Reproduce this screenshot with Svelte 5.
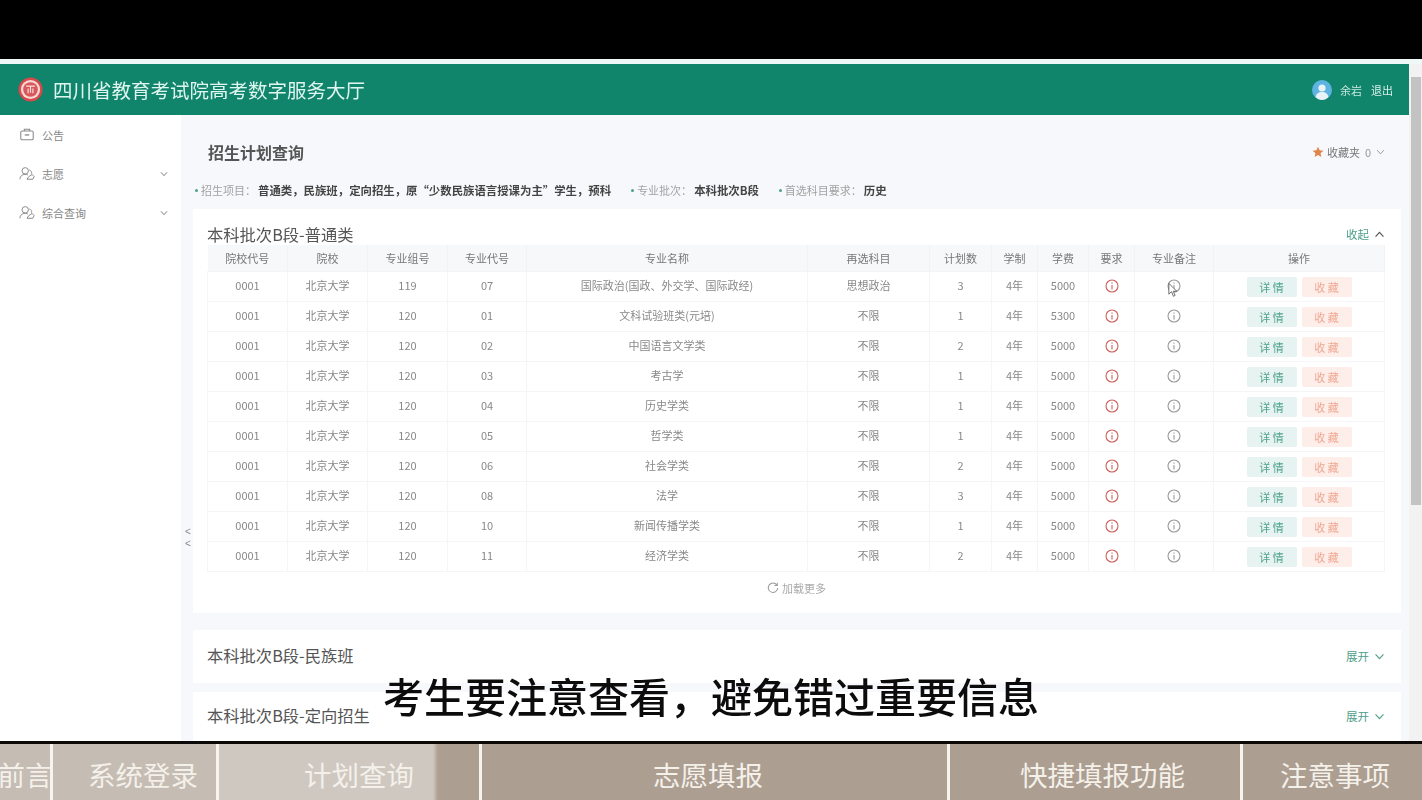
<script>
  const rows = [
    ['119','07','国际政治(国政、外交学、国际政经)','思想政治','3','5000'],
    ['120','01','文科试验班类(元培)','不限','1','5300'],
    ['120','02','中国语言文学类','不限','2','5000'],
    ['120','03','考古学','不限','1','5000'],
    ['120','04','历史学类','不限','1','5000'],
    ['120','05','哲学类','不限','1','5000'],
    ['120','06','社会学类','不限','2','5000'],
    ['120','08','法学','不限','3','5000'],
    ['120','10','新闻传播学类','不限','1','5000'],
    ['120','11','经济学类','不限','2','5000']
  ];
  const heads = ['院校代号','院校','专业组号','专业代号','专业名称','再选科目','计划数','学制','学费','要求','专业备注','操作'];
  const cols = [80,80,80,79,281,122,62,46,51,46,79,171];
</script>

{#snippet info(cls)}
  <svg class="info {cls}" viewBox="0 0 14 14" aria-hidden="true"><circle cx="7" cy="7" r="6" fill="none" stroke="currentColor" stroke-width="1.1"/><path d="M7 3.6v1.2M7 6v4.4" fill="none" stroke="currentColor" stroke-width="1.1"/></svg>
{/snippet}

{#snippet chev(cls)}
  <svg class="chev {cls}" viewBox="0 0 12 8" aria-hidden="true"><path d="M1.5 1.5 6 6.5l4.5-5" fill="none" stroke="currentColor" stroke-width="1.3"/></svg>
{/snippet}

{#snippet people()}
  <svg class="side-ic" viewBox="0 0 18 16" aria-hidden="true"><g fill="none" stroke="#8a8a8a" stroke-width="1.1"><circle cx="7" cy="5" r="3.6"/><path d="M1 14.5c0-3.4 2.6-5.6 6-5.6 1.200 0 2.200.3 3 .8"/><path d="M11.500 4c2.200.4 3.300 2.500 2.400 4.300M9 14.500h6.500L17 11.500l-2.200-2.500-3.800 2.500z"/></g></svg>
{/snippet}

<div class="screen">
  <div class="topband"></div>
  <div class="stripe"></div>
  <div class="window">
    <div class="app">
      <header class="header">
        <div class="brand">
          <svg class="logo" viewBox="0 0 26 26" aria-hidden="true"><circle cx="13" cy="13" r="12.500" fill="#d9484a"/><circle cx="13" cy="13" r="10" fill="#f6d9d4"/><circle cx="13" cy="13" r="7.600" fill="#d9565a"/><path d="M8.500 9.500h9M10.500 12v5M15.500 12v5M13 9.500v7" stroke="#f8e4e0" stroke-width="1.200" fill="none"/></svg>
          <span class="brand-name">四川省教育考试院高考数字服务大厅</span>
        </div>
        <div class="user">
          <svg class="avatar" viewBox="0 0 20 20" aria-hidden="true"><circle cx="10" cy="10" r="10" fill="#5db4e0"/><circle cx="10" cy="8" r="3.600" fill="#e8f3f8"/><path d="M3.500 17c1-3.800 3.600-5 6.500-5s5.500 1.200 6.500 5c-1.800 1.800-4 3-6.500 3s-4.700-1.200-6.500-3z" fill="#e8f3f8"/></svg>
          <span class="uname">余岩</span>
          <span class="logout">退出</span>
        </div>
      </header>
      <div class="body">
        <aside class="side">
          <div class="side-item">
            <svg class="side-ic" viewBox="0 0 18 16" aria-hidden="true"><g fill="none" stroke="#8a8a8a" stroke-width="1.200"><rect x="2" y="4" width="14" height="10" rx="1.500"/><path d="M6 4V2h6v2"/><path d="M6.500 8.500h5" stroke-width="1.500"/></g></svg>
            <span>公告</span>
          </div>
          <div class="side-item">
            {@render people()}
            <span>志愿</span>
            {@render chev('side-chev')}
          </div>
          <div class="side-item">
            {@render people()}
            <span>综合查询</span>
            {@render chev('side-chev')}
          </div>
        </aside>
        <main class="main">
          <div class="collapse-handle"><span>&lt;</span><span>&lt;</span></div>
          <div class="page-head">
            <h1>招生计划查询</h1>
            <div class="fav">
              <svg class="star" viewBox="0 0 14 14" aria-hidden="true"><path d="M7 .8 8.900 4.900l4.400.5-3.300 3 .9 4.400L7 10.600l-3.900 2.200.9-4.400-3.300-3 4.400-.5z" fill="#e0854a"/></svg>
              <span>收藏夹</span><span class="fav-num">0</span>
              {@render chev('fav-chev')}
            </div>
          </div>
          <div class="filters">
            <span class="filter wide"><i></i><em>招生项目：</em><b>普通类，民族班，定向招生，原“少数民族语言授课为主”学生，预科</b></span>
            <span class="filter"><i></i><em>专业批次：</em><b>本科批次B段</b></span>
            <span class="filter"><i></i><em>首选科目要求：</em><b>历史</b></span>
          </div>

          <section class="card open">
            <div class="card-head">
              <h2>本科批次B段-普通类</h2>
              <span class="toggle toggle-up">收起 {@render chev('up')}</span>
            </div>
            <table>
              <colgroup>
                {#each cols as w}<col style="width:{w}px" />{/each}
              </colgroup>
              <thead>
                <tr>{#each heads as h}<th>{h}</th>{/each}</tr>
              </thead>
              <tbody>
                {#each rows as r}
                  <tr>
                    <td>0001</td>
                    <td>北京大学</td>
                    <td>{r[0]}</td>
                    <td>{r[1]}</td>
                    <td>{r[2]}</td>
                    <td>{r[3]}</td>
                    <td>{r[4]}</td>
                    <td>4年</td>
                    <td>{r[5]}</td>
                    <td>{@render info('red')}</td>
                    <td>{@render info('grey')}</td>
                    <td><div class="ops"><span class="btn detail">详 情</span><span class="btn save">收 藏</span></div></td>
                  </tr>
                {/each}
              </tbody>
            </table>
            <div class="more">
              <svg class="refresh" viewBox="0 0 14 14" aria-hidden="true"><path d="M11.500 3.500A5.500 5.500 0 1 0 12.500 7" fill="none" stroke="#999" stroke-width="1.200"/><path d="M12 1v3.200H8.800" fill="none" stroke="#999" stroke-width="1.200"/></svg>
              <span>加载更多</span>
            </div>
          </section>

          <section class="card closed">
            <h2>本科批次B段-民族班</h2>
            <span class="toggle">展开 {@render chev('')}</span>
          </section>
          <section class="card closed last">
            <h2>本科批次B段-定向招生</h2>
            <span class="toggle">展开 {@render chev('')}</span>
          </section>
        </main>
      </div>
      <svg class="cursor" viewBox="0 0 12 18" aria-hidden="true"><path d="M1 1v13l3.200-3 2.300 5.500 2-.9L6.300 10.500H10.500z" fill="#fff" stroke="#555" stroke-width="1"/></svg>
      <div class="caption">考生要注意查看，避免错过重要信息</div>
    </div>
    <div class="scrollbar">
      <div class="thumb"></div>
    </div>
  </div>
  <nav class="chapters">
    <div class="seg s1 done">前言</div>
    <div class="seg s2 done">系统登录</div>
    <div class="seg s3 current">计划查询</div>
    <div class="seg s4">志愿填报</div>
    <div class="seg s5">快捷填报功能</div>
    <div class="seg s6">注意事项</div>
  </nav>
</div>

<style>
  :global(body) {
    margin: 0;
    background: #000;
  }
  .screen {
    width: 1422px;
    height: 800px;
    display: flex;
    flex-direction: column;
    overflow: hidden;
    font-family: "Noto Sans CJK SC", "Liberation Sans", sans-serif;
    background: #000;
  }
  .topband {
    height: 59px;
    background: #000;
    flex: none;
  }
  .stripe {
    height: 5px;
    background: #eef8f6;
    flex: none;
  }
  .window {
    height: 677px;
    flex: none;
    display: flex;
    background: #f7f8fb;
  }
  .app {
    width: 1409px;
    flex: none;
    display: flex;
    flex-direction: column;
    position: relative;
    overflow: hidden;
  }
  .scrollbar {
    flex: 1;
    background: #f2f2f3;
    padding: 13px 1px 0 2px;
  }
  .thumb {
    height: 428px;
    background: #c3c3c4;
  }
  .header {
    height: 51px;
    flex: none;
    background: #11846c;
    display: flex;
    align-items: center;
    justify-content: space-between;
    padding: 0 16px 0 18px;
    color: #e8f7f3;
    filter: blur(0.35px);
  }
  .brand {
    display: flex;
    align-items: center;
    gap: 10px;
  }
  .logo {
    width: 25px;
    height: 25px;
  }
  .brand-name {
    font-size: 19.500px;
    color: #dff5ef;
  }
  .user {
    display: flex;
    align-items: center;
    font-size: 11px;
  }
  .avatar {
    width: 20px;
    height: 20px;
    margin-right: 8px;
  }
  .uname {
    margin-right: 9px;
    color: #c8e6de;
  }
  .logout {
    color: #d8efe9;
  }
  .body {
    flex: 1;
    display: flex;
    min-height: 0;
    filter: blur(0.35px);
  }
  .side {
    width: 181px;
    flex: none;
    background: #fff;
    box-sizing: border-box;
  }
  .side-item {
    height: 39px;
    display: flex;
    align-items: center;
    padding: 0 13px 0 19px;
    font-size: 11px;
    color: #888;
  }
  .side-ic {
    width: 16px;
    height: 15px;
    margin-right: 7px;
    flex: none;
  }
  .side-chev {
    width: 8px;
    height: 6px;
    margin-left: auto;
    color: #666;
  }
  .main {
    flex: 1;
    min-width: 0;
    padding: 0 8px 0 12px;
    position: relative;
    overflow: hidden;
  }
  .collapse-handle {
    position: absolute;
    left: 4px;
    top: 411px;
    display: flex;
    flex-direction: column;
    font-size: 10px;
    line-height: 12px;
    color: #888;
    font-family: "Liberation Sans", sans-serif;
  }
  .page-head {
    height: 74px;
    display: flex;
    align-items: center;
    justify-content: space-between;
    padding: 0 16px 0 15px;
    margin-bottom: -18px;
  }
  .page-head h1 {
    margin: 0;
    font-size: 16px;
    font-weight: 700;
    color: #555;
  }
  .fav {
    display: flex;
    align-items: center;
    font-size: 11px;
    color: #777;
    gap: 3px;
  }
  .star {
    width: 12px;
    height: 12px;
  }
  .fav-num {
    margin-left: 2px;
    color: #999;
  }
  .fav-chev {
    width: 9px;
    height: 6px;
    color: #999;
    margin-left: 2px;
  }
  .filters {
    height: 38px;
    display: flex;
    align-items: center;
    font-size: 11px;
    padding-left: 2px;
    color: #999;
  }
  .filter {
    display: inline-flex;
    align-items: center;
    margin-right: 20px;
  }
  .filter i {
    width: 3px;
    height: 3px;
    border-radius: 50%;
    background: #4f9e8c;
    margin-right: 3px;
  }
  .filter em {
    font-style: normal;
    color: #a2a2a2;
  }
  .filter b {
    color: #444;
    font-weight: 700;
    font-size: 11.400px;
    margin-left: 2px;
  }
  .card {
    background: #fff;
    position: relative;
  }
  .open {
    height: 404px;
    padding: 14px 16px 0 15px;
    box-sizing: border-box;
    margin-bottom: 17px;
  }
  .card-head {
    height: 22px;
    display: flex;
    align-items: center;
    justify-content: space-between;
  }
  .card h2 {
    margin: 0 0 0 -1px;
    font-size: 16.300px;
    font-weight: 400;
    color: #555;
  }
  .toggle {
    font-size: 11.500px;
    color: #4e9e8a;
    display: inline-flex;
    align-items: center;
    gap: 5px;
  }
  .toggle .chev {
    width: 11px;
    height: 7px;
    color: #4e9e8a;
  }
  .toggle .up {
    transform: rotate(180deg);
    color: #555;
  }
  table {
    width: 1177px;
    margin-left: -1px;
    table-layout: fixed;
    border-collapse: collapse;
    font-size: 11px;
    color: #888;
    text-align: center;
  }
  th {
    height: 26px;
    padding: 0;
    background: #f7f8fa;
    font-weight: 400;
    color: #777;
    border-right: 1px solid #f1f2f4;
  }
  td {
    height: 30px;
    padding: 0 0 4px;
    border: 1px solid #f5f5f6;
    box-sizing: border-box;
  }
  .info {
    width: 14px;
    height: 14px;
    display: block;
    margin: 3px auto 0;
  }
  .red {
    color: #c9615a;
  }
  .grey {
    color: #9a9a9a;
  }
  .ops {
    display: flex;
    justify-content: center;
    gap: 5px;
    padding-top: 4px;
  }
  .btn {
    width: 50px;
    height: 20px;
    line-height: 20px;
    border-radius: 2px;
    font-size: 11px;
  }
  .detail {
    background: #e6f3f0;
    color: #4fa28d;
  }
  .save {
    background: #fdeee9;
    color: #efa893;
  }
  .more {
    display: flex;
    align-items: center;
    justify-content: center;
    gap: 3px;
    height: 32px;
    font-size: 11px;
    color: #aaa;
  }
  .refresh {
    width: 12px;
    height: 12px;
  }
  .closed {
    height: 53px;
    display: flex;
    align-items: center;
    justify-content: space-between;
    padding: 0 16px 0 15px;
    margin-bottom: 9px;
  }
  .closed h2 {
    margin-bottom: 3px;
  }
  .closed .toggle {
    margin-bottom: 1px;
  }
  .last {
    height: 49px;
    margin-bottom: 0;
  }
  .cursor {
    position: absolute;
    left: 1168px;
    top: 218px;
    width: 10px;
    height: 16px;
  }
  .caption {
    position: absolute;
    left: 383px;
    top: 601px;
    font-size: 41px;
    line-height: 60px;
    font-weight: 500;
    color: #0c0c0c;
    white-space: nowrap;
  }
  .chapters {
    flex: 1;
    display: flex;
    background: #ac9e90;
    border-top: 3px solid #0a0908;
    box-sizing: border-box;
    color: #f4f0ea;
    font-size: 27.500px;
  }
  .seg {
    display: flex;
    align-items: center;
    justify-content: center;
    border-right: 3px solid #f7f4ef;
    box-sizing: border-box;
    white-space: nowrap;
    padding-top: 4px;
  }
  .done {
    background: #c5bcb3;
  }
  .s1 {
    width: 53px;
  }
  .s2 {
    width: 166px;
    padding-left: 17px;
  }
  .s3 {
    width: 263px;
    padding-left: 20px;
    background: linear-gradient(90deg, #cfc8c1 0 214px, #ac9e90 219px);
  }
  .s4 {
    width: 468px;
    padding-right: 13px;
  }
  .s5 {
    width: 293px;
    padding-left: 15px;
  }
  .s6 {
    width: 179px;
    border-right: 0;
    padding-left: 5px;
  }
</style>
